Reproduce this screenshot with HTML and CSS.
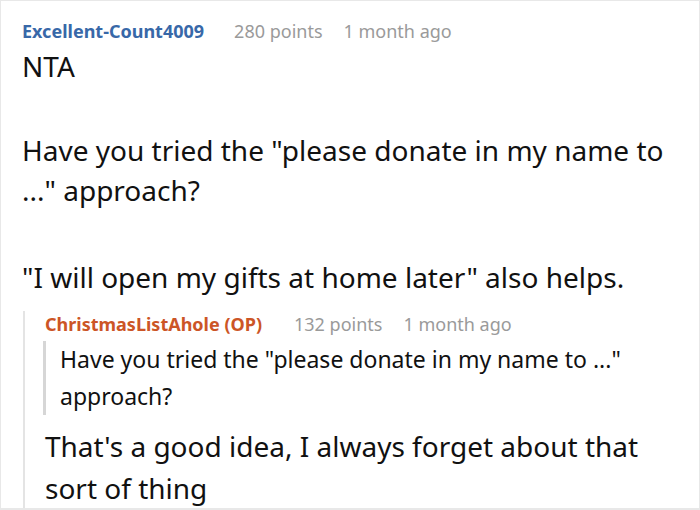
FILE: index.html
```html
<!DOCTYPE html>
<html>
<head>
<meta charset="utf-8">
<link rel="stylesheet" href="styles.css">
</head>
<body>
<div class="frame">
  <div class="comment">
    <div class="meta">
      <span class="author">Excellent-Count4009</span>
      <span class="info">280 points</span>
      <span class="info">1 month ago</span>
    </div>
    <div class="body">
      <p class="p-first">NTA</p>
      <p class="p-mid">Have you tried the "please donate in my name to ..." approach?</p>
      <p>"I will open my gifts at home later" also helps.</p>
    </div>
    <div class="reply">
      <div class="meta meta-reply">
        <span class="author op">ChristmasListAhole (OP)</span>
        <span class="info">132 points</span>
        <span class="info">1 month ago</span>
      </div>
      <blockquote class="quote">Have you tried the "please donate in my name to ..." approach?</blockquote>
      <p class="reply-text">That's a good idea, I always forget about that sort of thing</p>
    </div>
  </div>
</div>
</body>
</html>
```
FILE: styles.css
```css
* { box-sizing: border-box; }
html, body { margin: 0; padding: 0; background: #fff; }
body { font-family: "Noto Sans", "Open Sans", sans-serif; color: #111; }
.frame {
  width: 700px;
  height: 510px;
  border: 1px solid #e8e8e8;
  border-bottom-width: 2px;
  overflow: hidden;
  padding: 17px 0 0 21px;
}
.meta { display: flex; align-items: baseline; font-size: 18px; line-height: 26px; white-space: nowrap; }
.author { font-weight: 700; color: #3868a8; margin-right: 30px; }
.op { color: #cc5526; }
.info { color: #9a9a9a; margin-right: 21px; }
.body { font-size: 28px; line-height: 40px; }
.body p { margin: 0; width: 650px; }
.body .p-first { margin: 2px 0 44px; }
.body .p-mid { margin-bottom: 47px; }
.reply {
  margin: 14px 0 0 1px;
  border-left: 2px solid #e4e4e4;
  padding: 0 0 10px 20px;
}
.meta-reply .author { margin-right: 32px; }
.quote {
  margin: 4px 0 0 -2px;
  border-left: 3px solid #d6d6d6;
  padding: 0 0 0 14px;
  font-size: 23px;
  line-height: 37px;
  width: 610px;
}
.reply-text { margin: 10px 0 0; font-size: 28px; line-height: 42px; width: 620px; }
```
